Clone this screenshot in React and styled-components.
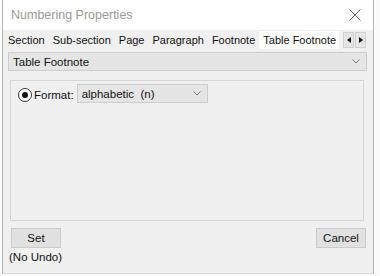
import styled, { createGlobalStyle } from "styled-components";

const GlobalStyle = createGlobalStyle`
  html, body {
    margin: 0;
    padding: 0;
    background: #fbfbfb;
    font-family: "Liberation Sans", Arial, sans-serif;
  }
`;

const Window = styled.div`
  margin-left: 2px;
  width: 370px;
  height: 273px;
  background: #f0f0f0;
  border-left: 1px solid #b4b4b4;
  border-right: 1px solid #b4b4b4;
  border-bottom: 1px solid #d8d8d8;
  display: flex;
  flex-direction: column;
`;

const TitleBar = styled.div`
  height: 30px;
  background: #ffffff;
  display: flex;
  align-items: center;
  justify-content: space-between;
  padding: 0 10px 0 8px;
`;

const Title = styled.span`
  font-size: 12.5px;
  color: #9a9a9a;
`;

const CloseButton = styled.svg`
  width: 12px;
  height: 12px;
  margin-right: 2px;
`;

const TabStrip = styled.div`
  display: flex;
  align-items: stretch;
  height: 18px;
  padding-left: 1px;
  margin-top: 1px;
`;

const Tab = styled.div`
  font-size: 11px;
  color: #111;
  padding: 0 ${(p) => (p.active ? "3px" : "4px")} 0 4px;
  display: flex;
  align-items: center;
  white-space: nowrap;
  background: ${(p) => (p.active ? "#ffffff" : "transparent")};
  margin-right: ${(p) => (p.active ? "4px" : "0")};
`;

const Arrows = styled.div`
  display: flex;
  gap: 1px;
  align-items: center;
`;

const ArrowButton = styled.div`
  width: 9px;
  height: 14px;
  background: #e6e6e6;
  border: 1px solid #d0d0d0;
  display: flex;
  align-items: center;
  justify-content: center;
`;

const Body = styled.div`
  flex: 1;
  display: flex;
  flex-direction: column;
  padding: 3px 6px 0 5px;
`;

const Combo = styled.div`
  height: 17px;
  width: ${(p) => p.width || "auto"};
  background: #e5e5e5;
  border: 1px solid #cdcdcd;
  display: flex;
  align-items: center;
  justify-content: space-between;
  padding: 0 6px 0 4px;
  font-size: 11.5px;
  color: #111;
  box-sizing: content-box;
`;

const Chevron = () => (
  <svg width="8" height="5" viewBox="0 0 8 5">
    <path d="M0.5 0.5 L4 4 L7.5 0.5" fill="none" stroke="#777" strokeWidth="1" />
  </svg>
);

const GroupBox = styled.div`
  margin: 9px 3px 0 2px;
  height: 133px;
  border: 1px solid #d6d6d6;
  padding: 3px 7px;
`;

const FormatRow = styled.div`
  display: flex;
  align-items: center;
`;

const Radio = styled.div`
  width: 12px;
  height: 12px;
  border-radius: 50%;
  border: 1px solid #333;
  background: #fff;
  display: flex;
  align-items: center;
  justify-content: center;
  margin-top: 3px;
  &::after {
    content: "";
    width: 6px;
    height: 6px;
    border-radius: 50%;
    background: #111;
  }
`;

const Label = styled.span`
  font-size: 11.5px;
  color: #111;
  margin: 3px 3px 0 2px;
`;

const Footer = styled.div`
  display: flex;
  justify-content: space-between;
  align-items: flex-start;
  margin-top: 7px;
  padding: 0 1px 0 3px;
`;

const Column = styled.div`
  display: flex;
  flex-direction: column;
`;

const Button = styled.div`
  width: 48px;
  height: 18px;
  background: #e1e1e1;
  border: 1px solid #cccccc;
  display: flex;
  align-items: center;
  justify-content: center;
  font-size: 11.5px;
  color: #111;
`;

const Note = styled.span`
  font-size: 11.5px;
  color: #111;
  margin-top: 3px;
  margin-left: -2px;
`;

const tabs = ["Section", "Sub-section", "Page", "Paragraph", "Footnote", "Table Footnote"];

export default function App() {
  return (
    <>
      <GlobalStyle />
      <Window>
        <TitleBar>
          <Title>Numbering Properties</Title>
          <CloseButton viewBox="0 0 12 12">
            <path d="M0.5 0.5 L11.5 11.5 M11.5 0.5 L0.5 11.5" stroke="#6a6a6a" strokeWidth="1" />
          </CloseButton>
        </TitleBar>
        <TabStrip>
          {tabs.map((t) => (
            <Tab key={t} active={t === "Table Footnote"}>
              {t}
            </Tab>
          ))}
          <Arrows>
            <ArrowButton>
              <svg width="4" height="6" viewBox="0 0 4 6">
                <path d="M4 0 L0 3 L4 6 Z" fill="#111" />
              </svg>
            </ArrowButton>
            <ArrowButton>
              <svg width="4" height="6" viewBox="0 0 4 6">
                <path d="M0 0 L4 3 L0 6 Z" fill="#111" />
              </svg>
            </ArrowButton>
          </Arrows>
        </TabStrip>
        <Body>
          <Combo>
            <span>Table Footnote</span>
            <Chevron />
          </Combo>
          <GroupBox>
            <FormatRow>
              <Radio />
              <Label>Format:</Label>
              <Combo width="119px">
                <span>alphabetic&nbsp; (n)</span>
                <Chevron />
              </Combo>
            </FormatRow>
          </GroupBox>
          <Footer>
            <Column>
              <Button>Set</Button>
              <Note>(No Undo)</Note>
            </Column>
            <Button>Cancel</Button>
          </Footer>
        </Body>
      </Window>
    </>
  );
}
